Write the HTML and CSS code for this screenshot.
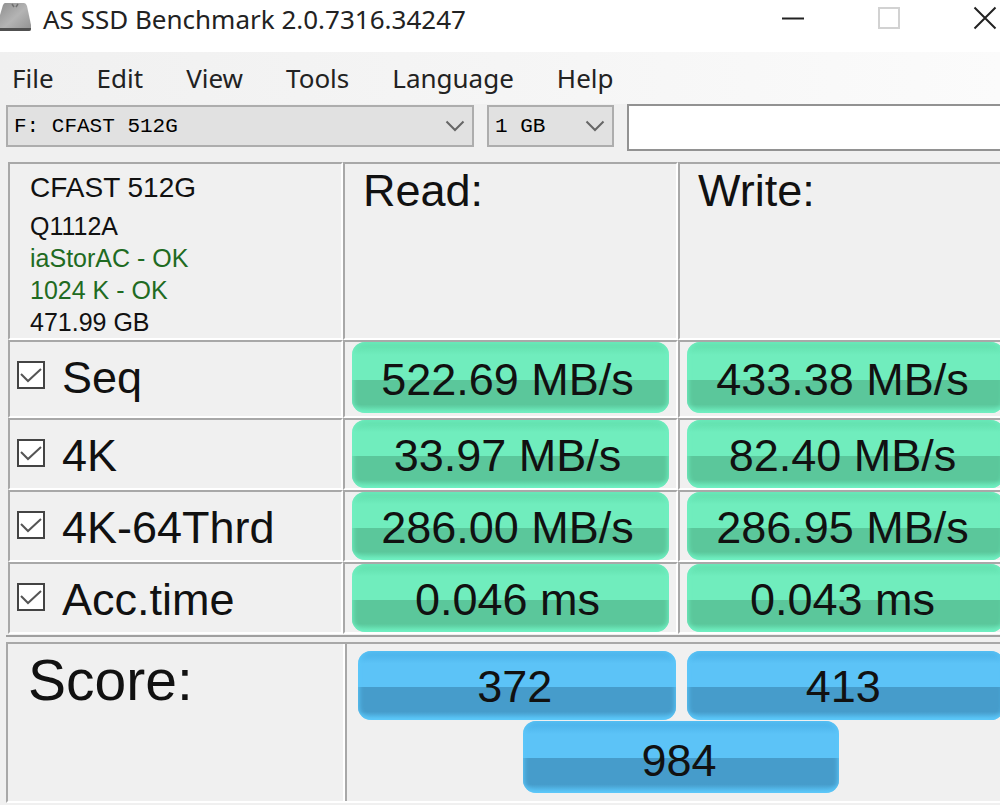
FILE: index.html
```html
<!DOCTYPE html>
<html lang="en">
<head>
<meta charset="utf-8">
<title>AS SSD Benchmark 2.0.7316.34247</title>
<link rel="stylesheet" href="styles.css">
</head>
<body>
<div class="window">
  <header class="titlebar">
    <svg class="drive" width="32" height="32" viewBox="0 0 32 32" aria-hidden="true">
      <defs>
        <linearGradient id="metal" x1="0" y1="0" x2="1" y2="1">
          <stop offset="0" stop-color="#8f8f8f"/>
          <stop offset="0.5" stop-color="#b4b4b4"/>
          <stop offset="1" stop-color="#909090"/>
        </linearGradient>
      </defs>
      <path d="M5 3H24Q26 3 27 6L31 25V29Q31 31 29 31H0V15L3 5Q4 3 5 3Z" fill="url(#metal)"/>
      <path d="M0 28H31V29Q31 31 29 31H0Z" fill="#505050"/>
      <path d="M12 4l2 3M18 4l-2 3" stroke="#6f6f6f" stroke-width="1.5"/>
    </svg>
    <h1 class="title">AS SSD Benchmark 2.0.7316.34247</h1>
    <div class="controls">
      <button type="button" aria-label="Minimize"><svg width="24" height="24" viewBox="0 0 24 24"><path d="M1 12.500H23" stroke="#222" stroke-width="2"/></svg></button>
      <button type="button" aria-label="Maximize" disabled><svg width="24" height="24" viewBox="0 0 24 24"><rect x="2" y="2" width="20" height="20" fill="none" stroke="#d2d2d2" stroke-width="2"/></svg></button>
      <button type="button" aria-label="Close"><svg width="24" height="24" viewBox="0 0 24 24"><path d="M1.500 1.500L22.500 22.500M22.500 1.500L1.500 22.500" stroke="#222" stroke-width="2"/></svg></button>
    </div>
  </header>

  <nav class="menubar" aria-label="Main menu">
    <button type="button">File</button>
    <button type="button">Edit</button>
    <button type="button">View</button>
    <button type="button">Tools</button>
    <button type="button">Language</button>
    <button type="button">Help</button>
  </nav>

  <form class="toolbar">
    <div class="combo">
      <select aria-label="Drive"><option>F: CFAST 512G</option></select>
      <svg width="20" height="12" viewBox="0 0 20 12" aria-hidden="true"><path d="M1.500 1.500L10 10L18.500 1.500" fill="none" stroke="#666" stroke-width="2"/></svg>
    </div>
    <div class="combo">
      <select aria-label="Test size"><option>1 GB</option></select>
      <svg width="20" height="12" viewBox="0 0 20 12" aria-hidden="true"><path d="M1.500 1.500L10 10L18.500 1.500" fill="none" stroke="#666" stroke-width="2"/></svg>
    </div>
    <input class="field" type="text" aria-label="Comment">
  </form>

  <main class="content">
    <table class="results">
      <thead>
        <tr>
          <td class="info">
            <p class="model">CFAST 512G</p>
            <p>Q1112A</p>
            <p class="ok">iaStorAC - OK</p>
            <p class="ok">1024 K - OK</p>
            <p>471.99 GB</p>
          </td>
          <th scope="col">Read:</th>
          <th scope="col">Write:</th>
        </tr>
      </thead>
      <tbody>
        <tr class="tall">
          <th scope="row"><label class="test"><span class="check"><input type="checkbox" checked><svg width="22" height="18" viewBox="0 0 22 18" aria-hidden="true"><path d="M1 8L8 15L21 3" fill="none" stroke="#555" stroke-width="2"/></svg></span>Seq</label></th>
          <td><div class="pill green">522.69 MB/s</div></td>
          <td><div class="pill green">433.38 MB/s</div></td>
        </tr>
        <tr>
          <th scope="row"><label class="test"><span class="check"><input type="checkbox" checked><svg width="22" height="18" viewBox="0 0 22 18" aria-hidden="true"><path d="M1 8L8 15L21 3" fill="none" stroke="#555" stroke-width="2"/></svg></span>4K</label></th>
          <td><div class="pill green">33.97 MB/s</div></td>
          <td><div class="pill green">82.40 MB/s</div></td>
        </tr>
        <tr>
          <th scope="row"><label class="test"><span class="check"><input type="checkbox" checked><svg width="22" height="18" viewBox="0 0 22 18" aria-hidden="true"><path d="M1 8L8 15L21 3" fill="none" stroke="#555" stroke-width="2"/></svg></span>4K-64Thrd</label></th>
          <td><div class="pill green">286.00 MB/s</div></td>
          <td><div class="pill green">286.95 MB/s</div></td>
        </tr>
        <tr>
          <th scope="row"><label class="test"><span class="check"><input type="checkbox" checked><svg width="22" height="18" viewBox="0 0 22 18" aria-hidden="true"><path d="M1 8L8 15L21 3" fill="none" stroke="#555" stroke-width="2"/></svg></span>Acc.time</label></th>
          <td><div class="pill green">0.046 ms</div></td>
          <td><div class="pill green">0.043 ms</div></td>
        </tr>
      </tbody>
    </table>

    <section class="score">
      <h2>Score:</h2>
      <div class="totals">
        <div class="pill blue">372</div>
        <div class="pill blue">413</div>
        <div class="pill blue overall">984</div>
      </div>
    </section>
  </main>
</div>
</body>
</html>
```

FILE: styles.css
```css
* {
  box-sizing: border-box;
}

body {
  margin: 0;
  background: #f0f0f0;
  color: #111;
  font-family: "Liberation Sans", Arial, sans-serif;
}

h1, h2, p {
  margin: 0;
  font-weight: 400;
}

button {
  border: 0;
  padding: 0;
  background: none;
  color: inherit;
  font: inherit;
}

svg {
  display: block;
}

.window {
  overflow: hidden;
}

/* Title bar */
.titlebar {
  display: flex;
  align-items: flex-start;
  height: 52px;
  background: #fff;
}

.drive {
  flex: none;
}

.title {
  flex: 1;
  padding-left: 11px;
  font-family: "Noto Sans", "Open Sans", sans-serif;
  font-size: 26px;
  line-height: 38px;
  white-space: nowrap;
  color: #222;
}

.controls {
  display: flex;
  gap: 72px;
  padding: 6px 3px 0 0;
}

/* Menu */
.menubar {
  display: flex;
  gap: 43px;
  height: 52px;
  padding: 0 12px;
  background: linear-gradient(90deg, #f0f0f0, #f5f5f5 50%, #fbfbfb);
  font-family: "Noto Sans", "Open Sans", sans-serif;
  font-size: 26px;
  color: #222;
}

/* Drive, size and comment */
.toolbar {
  display: grid;
  grid-template-columns: 468px 127px 1fr;
  align-items: start;
  gap: 13px;
  padding-left: 6px;
}

.combo {
  display: grid;
  align-items: center;
  margin-top: 1px;
}

.combo > * {
  grid-area: 1 / 1;
}

.combo svg {
  justify-self: end;
  margin-right: 9px;
  pointer-events: none;
}

.combo select {
  appearance: none;
  width: 100%;
  height: 42px;
  padding: 0 6px;
  border: 2px solid #adadad;
  border-radius: 0;
  background: #e1e1e1;
  color: #000;
  font-family: "Liberation Mono", monospace;
  font-size: 21px;
}

.field {
  width: 100%;
  height: 47px;
  padding: 0 8px;
  border: 2px solid #929292;
  border-right: 0;
  border-radius: 0;
  background: #fff;
  font-size: 25px;
}

/* Results */
.content {
  padding: 11px 0 0 6px;
}

.results {
  width: calc(100% + 13px);
  table-layout: fixed;
  border-collapse: separate;
  border-spacing: 0;
  border-bottom: 2px solid #a0a0a0;
  padding: 0 0 1px 2px;
}

.results td,
.results th {
  height: 72px;
  padding: 0 7px;
  border: solid;
  border-width: 2px;
  border-color: #a8a8a8 #fff #fff #a8a8a8;
  text-align: left;
  font-size: 45px;
  font-weight: 400;
}

.results .tall > * {
  height: 78px;
}

.results tbody td,
.results tbody th {
  vertical-align: top;
}

.results thead th {
  padding: 0 18px;
  vertical-align: top;
  line-height: 54px;
}

.results .info {
  height: 178px;
  padding: 4px 0 0 20px;
  font-size: 25px;
  line-height: 32px;
  vertical-align: top;
}

.results .info .model {
  padding-bottom: 2px;
  font-size: 28px;
  line-height: 40px;
}

.info .ok {
  color: #1f6b22;
}

.test {
  display: flex;
  align-items: center;
  gap: 17px;
  height: 68px;
  padding-top: 4px;
}

.check {
  display: grid;
  place-items: center;
  padding-bottom: 6px;
}

.check > * {
  grid-area: 1 / 1;
}

.check input {
  appearance: none;
  width: 28px;
  height: 28px;
  margin: 0;
  border: 2px solid #444;
  background: #fff;
}

.check svg {
  pointer-events: none;
}

.pill {
  height: 68px;
  padding-right: 6px;
  border-radius: 13px;
  font-size: 45px;
  line-height: 72px;
  text-align: center;
}

.tall .pill {
  height: 71px;
  line-height: 75px;
}

.green {
  background: linear-gradient(#5fdcaa, #70edbd 18%, #70edbd 53%, #5bc79b 53%, #5bc79b 88%, #70f0c2);
  box-shadow: inset 0 0 5px 1px #70f0c2;
}

.blue {
  background: linear-gradient(#48aee6, #5cc3f7 18%, #5cc3f7 52%, #469ccb 52%, #469ccb 88%, #5cc8fa);
  box-shadow: inset 0 0 5px 1px #5cc8fa;
}

/* Score */
.score {
  display: grid;
  grid-template-columns: 337px 1fr;
  width: calc(100% + 13px);
  margin-top: 5px;
  border-bottom: 2px solid #fff;
  border-top: 2px solid #a8a8a8;
  border-left: 2px solid #a8a8a8;
}

.score h2 {
  padding: 3px 20px;
  border-right: 2px solid #fff;
  font-size: 57px;
  line-height: 66px;
}

.totals {
  display: grid;
  grid-template-columns: 1fr 1fr;
  gap: 1px 11px;
  padding: 7px 9px 8px 11px;
  border-left: 2px solid #a8a8a8;
}

.totals .pill {
  height: 69px;
  padding-right: 4px;
  line-height: 71px;
}

.totals .overall {
  grid-column: 1 / -1;
  justify-self: center;
  width: 49%;
  height: 72px;
  line-height: 79px;
}
```
